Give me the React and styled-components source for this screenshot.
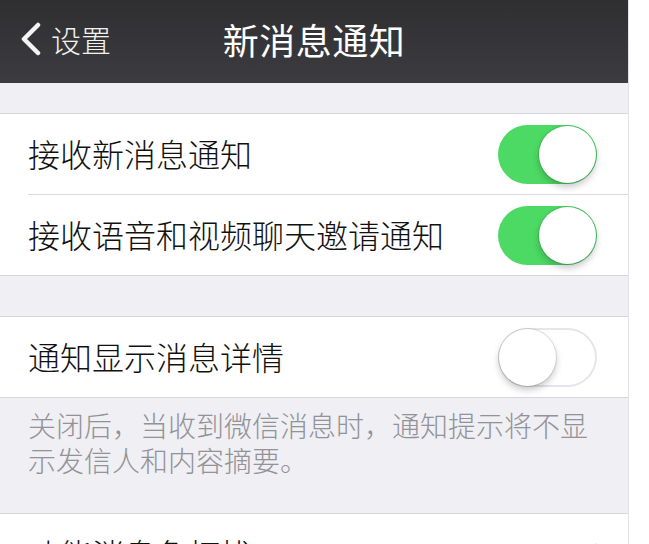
import styled, { createGlobalStyle } from "styled-components";

const GlobalStyle = createGlobalStyle`
  html, body {
    margin: 0;
    padding: 0;
    background: #fff;
    overflow: hidden;
  }
  body {
    font-family: "Noto Sans CJK SC", "Noto Sans", sans-serif;
  }
`;

const Page = styled.div`
  width: 628px;
  min-height: 544px;
  background: #efeff4;
  border-right: 1px solid #e4e4e8;
`;

const NavBar = styled.header`
  box-sizing: border-box;
  height: 83px;
  padding-bottom: 6px;
  display: grid;
  grid-template-columns: 1fr auto 1fr;
  align-items: center;
  background: linear-gradient(#2f2f32, #3c3c40);
  color: #fff;
`;

const BackButton = styled.div`
  display: flex;
  align-items: center;
  gap: 9px;
  padding-left: 18px;
  font-size: 30px;
  font-weight: 300;
  color: #f2f2f2;
`;

const Title = styled.h1`
  margin: 0;
  font-size: 36px;
  font-weight: 400;
  letter-spacing: 0.5px;
  color: #fff;
`;

const Group = styled.section`
  margin-top: ${(p) => p.$gap}px;
  background: #fff;
  border-top: 1px solid #d6d6da;
  border-bottom: 1px solid #d6d6da;
`;

const Row = styled.div`
  padding-left: 28px;
`;

const RowInner = styled.div`
  height: 80px;
  display: flex;
  align-items: center;
  justify-content: space-between;
  padding-right: 31px;
  border-top: ${(p) => (p.$first ? "none" : "1px solid #dcdce0")};
`;

const Label = styled.span`
  font-size: 32px;
  font-weight: 300;
  color: #111;
  margin-top: -3px;
`;

const Track = styled.div`
  box-sizing: border-box;
  width: 99px;
  height: 59px;
  border-radius: 30px;
  padding: 1px;
  display: flex;
  justify-content: ${(p) => (p.$on ? "flex-end" : "flex-start")};
  background: ${(p) => (p.$on ? "#4cd964" : "#fff")};
  box-shadow: ${(p) => (p.$on ? "none" : "inset 0 0 0 2px #e6e6ea")};
`;

const Knob = styled.div`
  width: 57px;
  height: 57px;
  border-radius: 50%;
  background: #fff;
  box-shadow: 0 0 0 1px rgba(0, 0, 0, 0.1), 0 4px 7px rgba(0, 0, 0, 0.22);
`;

const Footer = styled.p`
  margin: 0;
  padding: 10px 30px 35px 28px;
  font-size: 28px;
  font-weight: 300;
  line-height: 35px;
  color: #929297;
`;

const Chevron = styled.svg`
  width: 14px;
  height: 24px;
  margin-right: -10px;
`;

function Toggle({ on }) {
  return (
    <Track $on={on}>
      <Knob />
    </Track>
  );
}

const App = () => {
  return (
    <>
      <GlobalStyle />
      <Page>
        <NavBar>
          <BackButton>
            <svg width="24" height="34" viewBox="0 0 24 34">
              <path
                d="M20 3 L6 17 L20 31"
                fill="none"
                stroke="#f4f4f4"
                strokeWidth="4.5"
                strokeLinecap="round"
                strokeLinejoin="round"
              />
            </svg>
            设置
          </BackButton>
          <Title>新消息通知</Title>
          <div />
        </NavBar>

        <Group $gap={30}>
          <Row>
            <RowInner $first>
              <Label>接收新消息通知</Label>
              <Toggle on />
            </RowInner>
          </Row>
          <Row>
            <RowInner>
              <Label>接收语音和视频聊天邀请通知</Label>
              <Toggle on />
            </RowInner>
          </Row>
        </Group>

        <Group $gap={40}>
          <Row>
            <RowInner $first>
              <Label>通知显示消息详情</Label>
              <Toggle on={false} />
            </RowInner>
          </Row>
        </Group>
        <Footer>关闭后，当收到微信消息时，通知提示将不显示发信人和内容摘要。</Footer>

        <Group $gap={0}>
          <Row>
            <RowInner $first>
              <Label>功能消息免打扰</Label>
              <Chevron viewBox="0 0 14 24">
                <path
                  d="M3 3 L11 12 L3 21"
                  fill="none"
                  stroke="#c7c7cc"
                  strokeWidth="3"
                  strokeLinecap="round"
                  strokeLinejoin="round"
                />
              </Chevron>
            </RowInner>
          </Row>
        </Group>
      </Page>
    </>
  );
};

export default App;
